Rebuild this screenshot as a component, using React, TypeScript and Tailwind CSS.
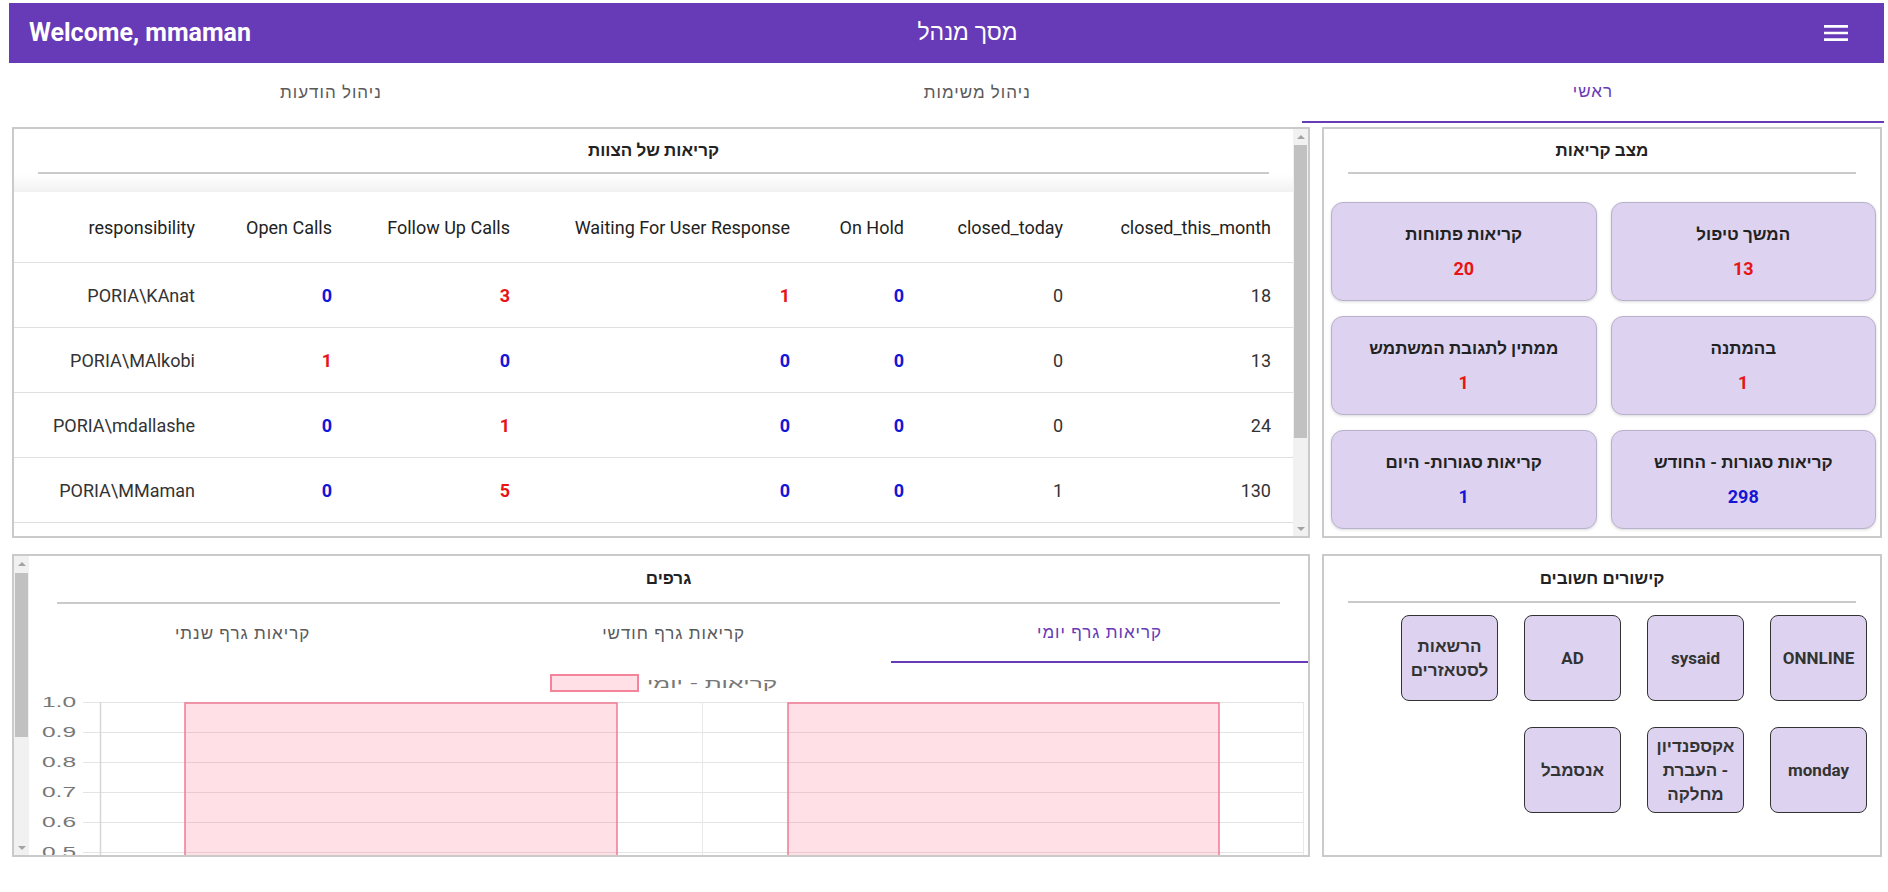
import React from 'react';

const RED = 'text-[#e81313]';
const BLUE = 'text-[#1515d6]';

type Cell = { v: string; c?: 'r' | 'b' };

const headers = [
  'closed_this_month',
  'closed_today',
  'On Hold',
  'Waiting For User Response',
  'Follow Up Calls',
  'Open Calls',
  'responsibility',
];

const rows: Cell[][] = [
  [{ v: '18' }, { v: '0' }, { v: '0', c: 'b' }, { v: '1', c: 'r' }, { v: '3', c: 'r' }, { v: '0', c: 'b' }, { v: 'PORIA\\KAnat' }],
  [{ v: '13' }, { v: '0' }, { v: '0', c: 'b' }, { v: '0', c: 'b' }, { v: '0', c: 'b' }, { v: '1', c: 'r' }, { v: 'PORIA\\MAlkobi' }],
  [{ v: '24' }, { v: '0' }, { v: '0', c: 'b' }, { v: '0', c: 'b' }, { v: '1', c: 'r' }, { v: '0', c: 'b' }, { v: 'PORIA\\mdallashe' }],
  [{ v: '130' }, { v: '1' }, { v: '0', c: 'b' }, { v: '0', c: 'b' }, { v: '5', c: 'r' }, { v: '0', c: 'b' }, { v: 'PORIA\\MMaman' }],
  [{ v: '' }, { v: '' }, { v: '' }, { v: '' }, { v: '' }, { v: '' }, { v: '' }],
];

const cards = [
  { t: 'המשך טיפול', v: '13', c: RED },
  { t: 'קריאות פתוחות', v: '20', c: RED },
  { t: 'בהמתנה', v: '1', c: RED },
  { t: 'ממתין לתגובת המשתמש', v: '1', c: RED },
  { t: 'קריאות סגורות - החודש', v: '298', c: BLUE },
  { t: 'קריאות סגורות- היום', v: '1', c: BLUE },
];

const links: React.ReactNode[] = [
  'ONNLINE',
  'sysaid',
  'AD',
  <>הרשאות<br />לסטאזרים</>,
  'monday',
  <>אקספנדיון<br />- העברת<br />מחלקה</>,
  'אנסמבל',
];

function Scrollbar({ thumbTop, thumbHeight }: { thumbTop: number; thumbHeight: number }) {
  return (
    <div className="w-[15px] bg-[#f1f1f1] flex flex-col shrink-0">
      <div className="h-[15px] shrink-0 flex items-center justify-center">
        <div className="w-0 h-0 border-x-[4px] border-x-transparent border-b-[4px] border-b-[#a3a3a3]" />
      </div>
      <div className="flex-1 flex flex-col">
        <div className="shrink-0" style={{ height: thumbTop }} />
        <div className="mx-[1px] shrink-0 bg-[#c1c1c1]" style={{ height: thumbHeight }} />
      </div>
      <div className="h-[15px] shrink-0 flex items-center justify-center">
        <div className="w-0 h-0 border-x-[4px] border-x-transparent border-t-[4px] border-t-[#a3a3a3]" />
      </div>
    </div>
  );
}

function PanelTitle({ text, h }: { text: string; h: string }) {
  return (
    <>
      <div className={`${h} shrink-0 flex items-center justify-center text-[17px] font-bold text-[#222]`} dir="rtl">
        {text}
      </div>
      <div className="mx-6 h-[2px] bg-[#cacaca] shrink-0" />
    </>
  );
}

function Tab({ label, active }: { label: string; active?: boolean }) {
  return (
    <div
      className={`flex-auto px-6 flex items-center justify-center text-[17px] tracking-[1px] ${
        active ? 'text-[#673ab7] border-b-2 border-[#673ab7]' : 'text-[#5a5a5a]'
      }`}
    >
      {label}
    </div>
  );
}

function Chart() {
  const labels = ['1.0', '0.9', '0.8', '0.7', '0.6', '0.5'];
  return (
    <svg width="1279" height="192" className="block shrink-0">
      <rect x="522" y="12" width="87" height="16" fill="#ffe0e6" stroke="#f3849c" strokeWidth="2" />
      <text
        transform="translate(618,25) scale(1.75,1)"
        fontSize="14"
        fill="#777"
        fontFamily="'Liberation Sans', Arial, sans-serif"
      >
        קריאות - יומי
      </text>
      {labels.map((l, i) => (
        <g key={l}>
          <line x1="54" x2="1274" y1={39.5 + i * 30} y2={39.5 + i * 30} stroke="#e4e4e4" strokeWidth="1" />
          <text
            transform={`translate(47,${44 + i * 30}) scale(1.75,1)`}
            fontSize="14"
            fill="#777"
            textAnchor="end"
            fontFamily="'Liberation Sans', Arial, sans-serif"
          >
            {l}
          </text>
        </g>
      ))}
      <line x1="71.5" x2="71.5" y1="39" y2="192" stroke="#d6d6d6" strokeWidth="1.5" />
      <line x1="673.5" x2="673.5" y1="39" y2="192" stroke="#e8e8e8" strokeWidth="1" />
      <line x1="1274.5" x2="1274.5" y1="39" y2="192" stroke="#e8e8e8" strokeWidth="1" />
      <rect x="156" y="40" width="432" height="170" fill="rgba(255,99,132,0.2)" stroke="#f07a94" strokeWidth="1.5" />
      <rect x="759" y="40" width="431" height="170" fill="rgba(255,99,132,0.2)" stroke="#f07a94" strokeWidth="1.5" />
    </svg>
  );
}

function App() {
  return (
    <div className="w-[1888px] h-[892px] bg-white overflow-hidden font-['Roboto','Liberation_Sans',sans-serif]">
      {/* header */}
      <div className="ml-[9px] mr-[4px] mt-[3px] h-[60px] bg-[#673ab7] text-white grid grid-cols-[1fr_auto_1fr] items-center pl-[20px] pr-[18px]">
        <div className="text-[25px] font-bold">Welcome, mmaman</div>
        <div className="text-[23px] font-medium pl-[40px]" dir="rtl">מסך מנהל</div>
        <div className="justify-self-end pr-[14px] flex">
          <svg width="32" height="32" viewBox="0 0 24 24" fill="white">
            <path d="M3 18h18v-2H3v2zm0-5h18v-2H3v2zm0-7v2h18V6H3z" />
          </svg>
        </div>
      </div>

      {/* main tabs */}
      <div className="ml-[9px] mr-[4px] h-[60px] flex" dir="rtl">
        <Tab label="ראשי" active />
        <Tab label="ניהול משימות" />
        <Tab label="ניהול הודעות" />
      </div>

      {/* content */}
      <div className="flex gap-[12px] pl-[12px] pr-[6px] pt-[4px]">
        <div className="w-[1298px] flex flex-col gap-[16px]">
          {/* team calls table */}
          <div className="h-[411px] border-2 border-[#cacaca] flex overflow-hidden">
            <div className="flex-1 flex flex-col overflow-hidden">
              <PanelTitle text="קריאות של הצוות" h="h-[43px]" />
              <div className="h-[18px] shrink-0 bg-gradient-to-b from-white to-[#f1f1f1]" />
              <div dir="rtl" className="text-[18px] shrink-0">
                <div className="grid grid-cols-[208px_159px_114px_280px_178px_137px_1fr] h-[71px] border-b border-[#e0e0e0] items-center text-[#222]">
                  {headers.map((h) => (
                    <div key={h} className="text-right pr-[22px] whitespace-nowrap">
                      {h}
                    </div>
                  ))}
                </div>
                {rows.map((r, i) => (
                  <div
                    key={i}
                    className="grid grid-cols-[208px_159px_114px_280px_178px_137px_1fr] h-[65px] border-b border-[#e0e0e0] items-center text-[#333]"
                  >
                    {r.map((c, j) => (
                      <div
                        key={j}
                        className={`text-right pr-[22px] ${c.c === 'r' ? `${RED} font-bold` : c.c === 'b' ? `${BLUE} font-bold` : ''}`}
                      >
                        {c.v}
                      </div>
                    ))}
                  </div>
                ))}
              </div>
            </div>
            <Scrollbar thumbTop={1} thumbHeight={293} />
          </div>

          {/* graphs */}
          <div className="h-[303px] border-2 border-[#cacaca] flex overflow-hidden">
            <Scrollbar thumbTop={2} thumbHeight={164} />
            <div className="flex-1 flex flex-col overflow-hidden">
              <div className="h-[46px] flex items-center justify-center text-[17px] font-bold text-[#222] shrink-0" dir="rtl">
                גרפים
              </div>
              <div className="mx-[28px] h-[2px] bg-[#cacaca] shrink-0" />
              <div className="h-[59px] flex shrink-0" dir="rtl">
                <Tab label="קריאות גרף יומי" active />
                <Tab label="קריאות גרף חודשי" />
                <Tab label="קריאות גרף שנתי" />
              </div>
              <Chart />
            </div>
          </div>
        </div>

        <div className="w-[560px] flex flex-col gap-[16px]">
          {/* calls status */}
          <div className="h-[411px] border-2 border-[#cacaca] flex flex-col">
            <PanelTitle text="מצב קריאות" h="h-[43px]" />
            <div dir="rtl" className="grid grid-cols-2 gap-x-[14px] gap-y-[15px] pr-[4px] pl-[7px] mt-[28px]">
              {cards.map((c) => (
                <div
                  key={c.t}
                  className="h-[99px] rounded-[12px] border border-[#b9b1cb] bg-[#ddd3f0] shadow-[0_1px_3px_rgba(0,0,0,0.15)] flex flex-col items-center justify-center gap-[13px]"
                >
                  <div className="text-[17px] font-bold text-[#222] leading-[22px]">{c.t}</div>
                  <div className={`text-[18px] font-bold leading-[22px] ${c.c}`}>{c.v}</div>
                </div>
              ))}
            </div>
          </div>

          {/* important links */}
          <div className="h-[303px] border-2 border-[#cacaca] flex flex-col">
            <PanelTitle text="קישורים חשובים" h="h-[45px]" />
            <div dir="rtl" className="grid grid-cols-[97px_97px_97px_97px] gap-[26px] pr-[13px] mt-[12px]">
              {links.map((l, i) => (
                <div
                  key={i}
                  className="h-[86px] rounded-[8px] border border-[#333] bg-[#ddd3f0] flex items-center justify-center text-center text-[17px] font-bold text-[#333] leading-[24px]"
                >
                  <span>{l}</span>
                </div>
              ))}
            </div>
          </div>
        </div>
      </div>
    </div>
  );
}

export default App;
